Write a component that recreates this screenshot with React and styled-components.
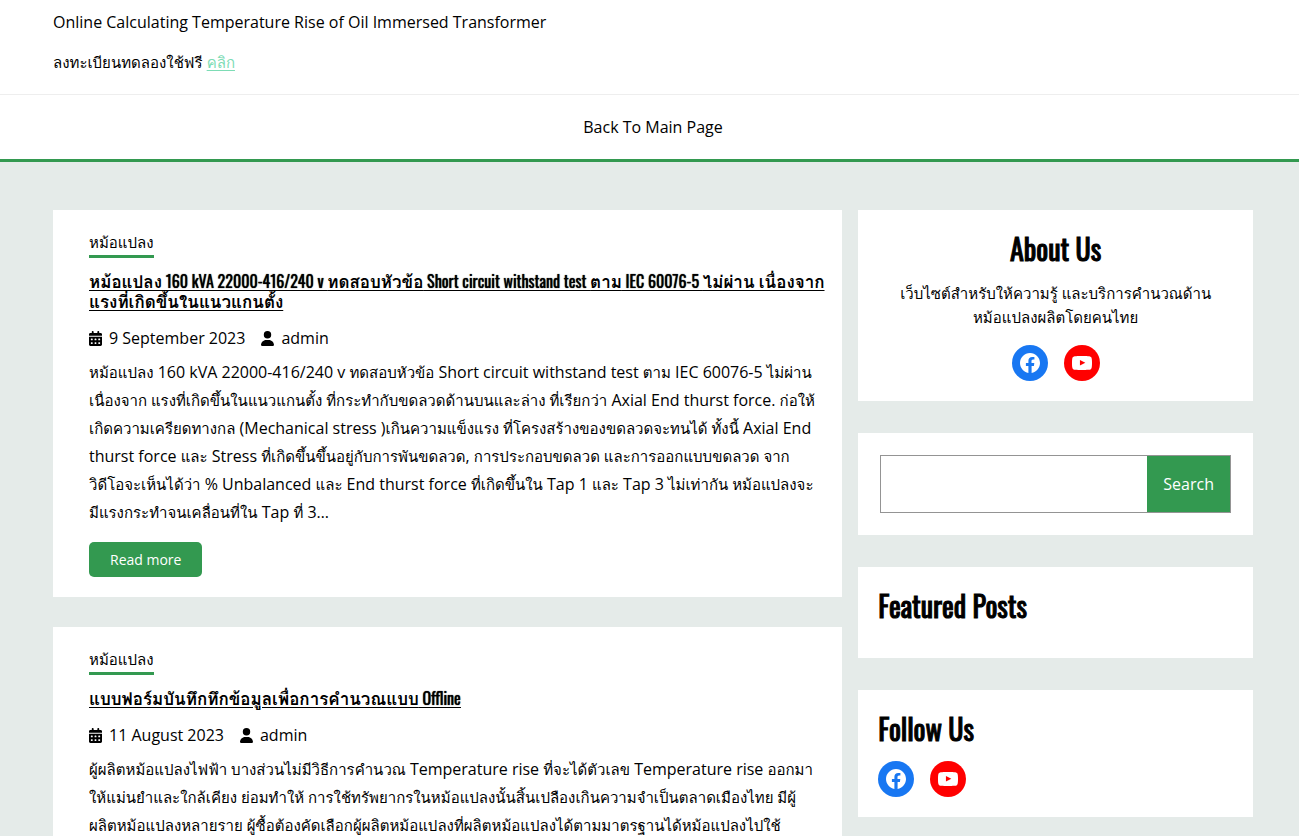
// Components==============
import React from "react";
import styled, { createGlobalStyle, ThemeProvider } from "styled-components";
import { FaCalendarDays, FaUser } from "react-icons/fa6";
// =========================

const theme = {
  green: "#339950",
  mint: "#7ddcb5",
  mist: "#e5ebe9",
  line: "#eeeeee",
  body: `"Open Sans", Tahoma, Loma, Waree, "Noto Sans Thai Looped", "Noto Looped Thai", "Noto Sans Thai", "DejaVu Sans", sans-serif`,
  heading: `Oswald, "Liberation Sans Narrow", Tahoma, Loma, Waree, "Noto Sans Thai Looped", "Noto Sans Thai", sans-serif`,
};

const GlobalStyle = createGlobalStyle`
  * {
    box-sizing: border-box;
  }
  body {
    margin: 0;
    background: ${theme.mist};
    color: #000;
    font-family: ${theme.body};
    font-size: 16px;
    line-height: 24px;
  }
  h2, h3, p {
    margin: 0;
  }
  a {
    color: inherit;
    text-decoration: none;
  }
`;

const Thai = styled.span`
  font-size: 15px;
  line-height: 1;
`;

const Top = styled.header`
  display: grid;
  gap: 16px;
  padding: 10px 46px 20px 53px;
  background: #fff;
  border-bottom: 1px solid ${({ theme: { line } }) => line};
`;

const TryLink = styled.a`
  color: ${({ theme: { mint } }) => mint};
  text-decoration: underline;
  text-underline-offset: 2px;
`;

const Nav = styled.nav`
  display: flex;
  justify-content: center;
  padding: 20px 46px 20px 53px;
  background: #fff;
  border-bottom: 3px solid ${({ theme: { green } }) => green};
`;

const Main = styled.main`
  display: grid;
  grid-template-columns: minmax(0, 2fr) minmax(0, 1fr);
  gap: 16px;
  align-items: start;
  padding: 48px 46px 48px 53px;
`;

const Posts = styled.div`
  display: grid;
  grid-template-columns: minmax(0, 1fr);
  gap: 30px;
`;

const PostCard = styled.article`
  display: flex;
  flex-direction: column;
  align-items: flex-start;
  padding: 20px 20px 20px 36px;
  background: #fff;
`;

const Category = styled.a`
  height: 28px;
  border-bottom: 3px solid ${({ theme: { green } }) => green};
`;

const PostTitle = styled.h3`
  margin: 13px 0;
  font-family: ${({ theme: { heading } }) => heading};
  font-size: 16px;
  font-weight: 400;
  line-height: 20px;
  text-shadow: 0 0 1px #000;
  white-space: nowrap;
  a {
    text-decoration: underline;
    text-underline-offset: 2px;
  }
  ${Thai} {
    font-size: 17px;
    font-weight: 600;
    text-shadow: none;
  }
`;

const Meta = styled.div`
  display: flex;
  gap: 16px;
  margin-bottom: 6px;
  line-height: 28px;
`;

const MetaItem = styled.span`
  display: flex;
  align-items: center;
  gap: 7px;
  svg {
    width: 13px;
    height: 15px;
  }
`;

const Excerpt = styled.p`
  line-height: 28px;
  white-space: nowrap;
`;

const ReadMore = styled.a`
  margin-top: 16px;
  padding: 0 21px;
  border-radius: 5px;
  background: ${({ theme: { green } }) => green};
  color: #fff;
  font-size: 14px;
  line-height: 35px;
`;

const Sidebar = styled.aside`
  display: grid;
  gap: 32px;
`;

const Widget = styled.section`
  display: flex;
  flex-direction: column;
  align-items: ${({ $centered }) => ($centered ? "center" : "flex-start")};
  text-align: ${({ $centered }) => ($centered ? "center" : "left")};
  padding: 20px;
  background: #fff;
`;

const WidgetTitle = styled.h2`
  margin-bottom: 14px;
  font-family: ${({ theme: { heading } }) => heading};
  font-size: 28px;
  font-weight: 400;
  line-height: 37px;
  -webkit-text-stroke: 1px #000;
`;

const About = styled.p`
  margin-bottom: 16px;
`;

const SearchWidget = styled.form`
  padding: 22px;
  background: #fff;
`;

const SearchBox = styled.div`
  display: flex;
  height: 58px;
  border: 1px solid #949494;
`;

const SearchInput = styled.input`
  flex: 1;
  min-width: 0;
  padding: 0 8px;
  border: 0;
  font: inherit;
`;

const SearchButton = styled.button`
  padding: 0 16px;
  border: 0;
  background: ${({ theme: { green } }) => green};
  color: #fff;
  font: inherit;
`;

const SocialList = styled.div`
  display: flex;
  gap: 16px;
`;

const SocialLink = styled.a`
  display: grid;
  place-items: center;
  width: 36px;
  height: 36px;
  border-radius: 50%;
  background: ${({ $color }) => $color};
  svg {
    width: 24px;
    height: 24px;
    fill: #fff;
  }
`;

const posts = [
  {
    id: 1,
    title: [
      "หม้อแปลง 160 kVA 22000-416/240 v ทดสอบหัวข้อ Short circuit withstand test ตาม IEC 60076-5 ไม่ผ่าน เนื่องจาก",
      "แรงที่เกิดขึ้นในแนวแกนตั้ง",
    ],
    date: "9 September 2023",
    excerpt: [
      "หม้อแปลง 160 kVA 22000-416/240 v ทดสอบหัวข้อ Short circuit withstand test ตาม IEC 60076-5 ไม่ผ่าน",
      "เนื่องจาก แรงที่เกิดขึ้นในแนวแกนตั้ง ที่กระทำกับขดลวดด้านบนและล่าง ที่เรียกว่า Axial End thurst force. ก่อให้",
      "เกิดความเครียดทางกล (Mechanical stress )เกินความแข็งแรง ที่โครงสร้างของขดลวดจะทนได้ ทั้งนี้ Axial End",
      "thurst force และ Stress ที่เกิดขึ้นขึ้นอยู่กับการพันขดลวด, การประกอบขดลวด และการออกแบบขดลวด จาก",
      "วิดีโอจะเห็นได้ว่า % Unbalanced และ End thurst force ที่เกิดขึ้นใน Tap 1 และ Tap 3 ไม่เท่ากัน หม้อแปลงจะ",
      "มีแรงกระทำจนเคลื่อนที่ใน Tap ที่ 3…",
    ],
  },
  {
    id: 2,
    title: ["แบบฟอร์มบันทึกทึกข้อมูลเพื่อการคำนวณแบบ Offline"],
    date: "11 August 2023",
    excerpt: [
      "ผู้ผลิตหม้อแปลงไฟฟ้า บางส่วนไม่มีวิธีการคำนวณ Temperature rise ที่จะได้ตัวเลข Temperature rise ออกมา",
      "ให้แม่นยำและใกล้เคียง ย่อมทำให้ การใช้ทรัพยากรในหม้อแปลงนั้นสิ้นเปลืองเกินความจำเป็นตลาดเมืองไทย มีผู้",
      "ผลิตหม้อแปลงหลายราย ผู้ซื้อต้องคัดเลือกผู้ผลิตหม้อแปลงที่ผลิตหม้อแปลงได้ตามมาตรฐานได้หม้อแปลงไปใช้",
    ],
  },
];

function Mixed({ children }) {
  return children
    .split(/([\u0e00-\u0e7f]+(?: [\u0e00-\u0e7f]+)*)/)
    .map((part, i) => (i % 2 ? <Thai key={i}>{part}</Thai> : part));
}

function Lines({ text }) {
  return text.map((line, i) => (
    <React.Fragment key={line}>
      {i > 0 && <br />}
      <Mixed>{line}</Mixed>
    </React.Fragment>
  ));
}

function Post({ post }) {
  return (
    <PostCard>
      <Category href="#category">
        <Thai>หม้อแปลง</Thai>
      </Category>
      <PostTitle>
        <a href="#post">
          <Lines text={post.title} />
        </a>
      </PostTitle>
      <Meta>
        <MetaItem>
          <FaCalendarDays />
          {post.date}
        </MetaItem>
        <MetaItem>
          <FaUser />
          admin
        </MetaItem>
      </Meta>
      <Excerpt>
        <Lines text={post.excerpt} />
      </Excerpt>
      <ReadMore href="#post">Read more</ReadMore>
    </PostCard>
  );
}

function Social() {
  return (
    <SocialList>
      <SocialLink href="#facebook" aria-label="Facebook" $color="#1877f2">
        <svg viewBox="0 0 24 24">
          <path d="M12 2C6.5 2 2 6.5 2 12c0 5 3.7 9.1 8.4 9.9v-7H7.9V12h2.5V9.8c0-2.5 1.5-3.9 3.8-3.9 1.1 0 2.2.2 2.2.2v2.5h-1.3c-1.2 0-1.6.8-1.6 1.6V12h2.8l-.4 2.9h-2.3v7C18.3 21.1 22 17 22 12c0-5.5-4.5-10-10-10z" />
        </svg>
      </SocialLink>
      <SocialLink href="#youtube" aria-label="YouTube" $color="#ff0000">
        <svg viewBox="0 0 24 24">
          <path d="M21.8 8.001s-.195-1.378-.795-1.985c-.76-.797-1.613-.801-2.004-.847-2.799-.202-6.997-.202-6.997-.202h-.009s-4.198 0-6.997.202c-.39.047-1.242.051-2.003.847-.6.607-.795 1.985-.795 1.985S2 9.62 2 11.238v1.517c0 1.618.2 3.237.2 3.237s.195 1.378.795 1.985c.761.797 1.76.771 2.205.855 1.6.153 6.8.201 6.8.201s4.203-.006 7.001-.209c.391-.047 1.243-.051 2.004-.847.6-.607.795-1.985.795-1.985s.2-1.618.2-3.237v-1.517C22 9.62 21.8 8.001 21.8 8.001zM9.935 14.594l-.001-5.62 5.404 2.82-5.403 2.8z" />
        </svg>
      </SocialLink>
    </SocialList>
  );
}

export default function App() {
  return (
    <ThemeProvider theme={theme}>
      <GlobalStyle />
      <Top>
        <p>Online Calculating Temperature Rise of Oil Immersed Transformer</p>
        <p>
          <Thai>ลงทะเบียนทดลองใช้ฟรี</Thai>{" "}
          <TryLink href="#register">
            <Thai>คลิก</Thai>
          </TryLink>
        </p>
      </Top>
      <Nav>
        <a href="#main">Back To Main Page</a>
      </Nav>
      <Main>
        <Posts>
          {posts.map((post) => (
            <Post key={post.id} post={post} />
          ))}
        </Posts>
        <Sidebar>
          <Widget $centered>
            <WidgetTitle>About Us</WidgetTitle>
            <About>
              <Thai>
                เว็บไซต์สำหรับให้ความรู้ และบริการคำนวณด้าน
                <br />
                หม้อแปลงผลิตโดยคนไทย
              </Thai>
            </About>
            <Social />
          </Widget>
          <SearchWidget role="search">
            <SearchBox>
              <SearchInput type="search" aria-label="Search" />
              <SearchButton type="button">Search</SearchButton>
            </SearchBox>
          </SearchWidget>
          <Widget>
            <WidgetTitle>Featured Posts</WidgetTitle>
          </Widget>
          <Widget>
            <WidgetTitle>Follow Us</WidgetTitle>
            <Social />
          </Widget>
        </Sidebar>
      </Main>
    </ThemeProvider>
  );
}
